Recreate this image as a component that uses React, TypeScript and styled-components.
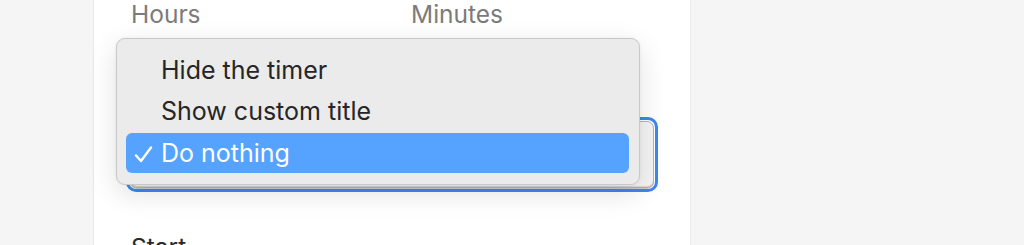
import { styled, createGlobalStyle } from "styled-components";

const GlobalStyle = createGlobalStyle`
  html, body {
    margin: 0;
    padding: 0;
    background: #f5f5f5;
    font-family: Inter, "Noto Sans", "Liberation Sans", sans-serif;
    -webkit-font-smoothing: antialiased;
  }
`;

const StyledPage = styled.div`
  display: flex;
  height: 245px;
  overflow: hidden;
  padding-left: 93px;
`;

const StyledPanel = styled.div`
  position: relative;
  width: 598px;
  background: #ffffff;
  border-left: 1px solid #e8e8e8;
  border-right: 1px solid #ececec;
  padding: 0 32px 0 37px;
  box-sizing: border-box;
`;

const StyledRow = styled.div`
  display: grid;
  grid-template-columns: 280px 1fr;
`;

const StyledLabel = styled.div`
  color: #7b7b7b;
  font-size: 24.5px;
  line-height: 28px;
`;

const StyledSelectRing = styled.div`
  margin: 89px 0 0 -5px;
  height: 67px;
  border: 3px solid #3c87f0;
  border-radius: 10px;
  padding: 1px;
`;

const StyledSelectBox = styled.div`
  height: 100%;
  box-sizing: border-box;
  border: 1px solid #b4b4b4;
  border-radius: 7px;
  background: #f4f4f4;
  box-shadow: inset 0 -1px 0 #d8d8d8, 0 1px 0 #c8c8c8;
`;

const StyledStart = styled.div`
  color: #2a2a2a;
  font-size: 24.5px;
  line-height: 28px;
  margin-top: 41px;
`;

const StyledMenu = styled.div`
  position: absolute;
  left: 22px;
  top: 38px;
  width: 524px;
  height: 147px;
  box-sizing: border-box;
  padding: 11px 10px 11px 9px;
  background: #ebebeb;
  border: 1px solid #c9c9c9;
  border-radius: 9px;
  box-shadow: 0 8px 28px rgba(0, 0, 0, 0.12), 0 0 3px rgba(0, 0, 0, 0.06);
  display: flex;
  flex-direction: column;
  gap: 1px;
`;

const StyledItem = styled.div<{ $active?: boolean }>`
  position: relative;
  height: 41px;
  display: flex;
  align-items: center;
  padding-left: 35px;
  border-radius: 6px;
  font-size: 25px;
  color: ${(p) => (p.$active ? "#ffffff" : "#262626")};
  background: ${(p) => (p.$active ? "#56a2ff" : "transparent")};
`;

const StyledCheck = styled.svg`
  position: absolute;
  left: 8px;
  top: 13px;
  width: 19px;
  height: 17px;
`;

const items = ["Hide the timer", "Show custom title", "Do nothing"];

export default function App() {
  return (
    <>
      <GlobalStyle />
      <StyledPage>
        <StyledPanel>
          <StyledRow>
            <StyledLabel>Hours</StyledLabel>
            <StyledLabel>Minutes</StyledLabel>
          </StyledRow>
          <StyledSelectRing>
            <StyledSelectBox />
          </StyledSelectRing>
          <StyledStart>Start</StyledStart>
          <StyledMenu>
            {items.map((label) => {
              const active = label === "Do nothing";
              return (
                <StyledItem key={label} $active={active}>
                  {active && (
                    <StyledCheck viewBox="0 0 19 17">
                      <path
                        d="M2 9.5 L7 15 L17 1.5"
                        fill="none"
                        stroke="#ffffff"
                        strokeWidth="2.4"
                        strokeLinecap="round"
                        strokeLinejoin="round"
                      />
                    </StyledCheck>
                  )}
                  {label}
                </StyledItem>
              );
            })}
          </StyledMenu>
        </StyledPanel>
      </StyledPage>
    </>
  );
}
